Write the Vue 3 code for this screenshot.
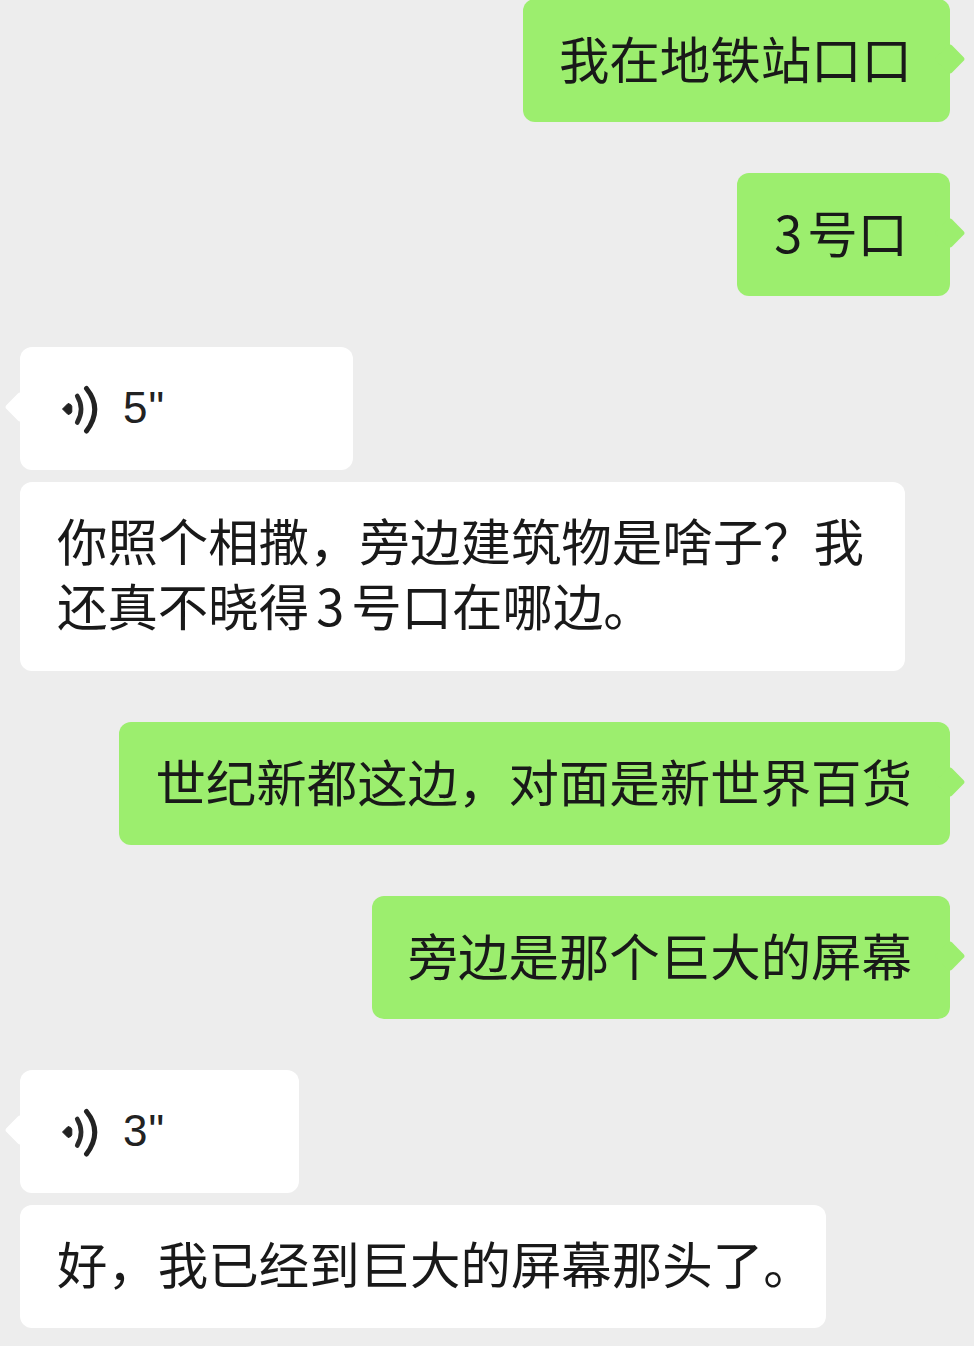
<script setup>
const rows = [
  { k: 'me', parts: [{ t: '我在地铁站口口' }], gap: 'g51' },
  { k: 'me', parts: [{ t: '3', c: 'num-r' }, { t: '号口', c: 'tr' }], gap: 'g51' },
  { k: 'voice', t: '5"', w: 333, gap: 'g12' },
  { k: 'them', two: true, parts: [{ t: '你照个相撒，旁边建筑物是啥子？我还真不晓得' }, { t: '3', c: 'num' }, { t: '号口在哪边。' }], gap: 'g51' },
  { k: 'me', parts: [{ t: '世纪新都这边，对面是新世界百货' }], gap: 'g51' },
  { k: 'me', parts: [{ t: '旁边是那个巨大的屏幕' }], gap: 'g51' },
  { k: 'voice', t: '3"', w: 279, gap: 'g12' },
  { k: 'them', parts: [{ t: '好，我已经到巨大的屏幕那头了' }, { t: '。', c: 'end' }], gap: 'g0' },
]
</script>

<template>
  <div class="chat">
    <div v-for="(r, i) in rows" :key="i" class="row" :class="[r.k === 'me' ? 'right' : 'left', r.gap]">
      <div v-if="r.k === 'voice'" class="bubble white tail-left voice" :style="{ width: r.w + 'px' }">
        <svg class="wave" width="40" height="50" viewBox="0 0 40 50">
          <path d="M2.5 25 L8 19.5 Q11.5 20 11.8 22.5 L11.8 27.5 Q11.5 30 8 30.5 Z" fill="#222" stroke="#222" stroke-width="1" stroke-linejoin="round" />
          <path d="M17.2 12 Q25 25 17.2 38.5" fill="none" stroke="#2a2a2a" stroke-width="4.6" stroke-linecap="round" />
          <path d="M26.5 4.5 Q43 25 26.5 47" fill="none" stroke="#222" stroke-width="5" stroke-linecap="round" />
        </svg>
        <span class="secs">{{ r.t }}</span>
      </div>
      <div v-else class="bubble" :class="r.k === 'me' ? 'green tail-right' : ['white', 'wide', r.two ? 'two' : 'one']">
        <span v-for="(p, j) in r.parts" :key="j" :class="p.c">{{ p.t }}</span>
      </div>
    </div>
  </div>
</template>

<style scoped>
.chat {
  width: 974px;
  height: 1346px;
  background: #ededed;
  overflow: hidden;
  box-sizing: border-box;
  padding: 0 24px 0 20px;
  font-family: "Noto Sans CJK SC", "Liberation Sans", sans-serif;
  color: #191919;
}
.row { display: flex; }
.row:first-child { margin-top: -1px; }
.right { justify-content: flex-end; }
.left { justify-content: flex-start; }
.g51 { margin-bottom: 51px; }
.g12 { margin-bottom: 12px; }
.g0 { margin-bottom: 0; }
.bubble {
  position: relative;
  box-sizing: border-box;
  border-radius: 12px;
  padding: 28px 38px 34px 36px;
  font-size: 50.45px;
  line-height: 61px;
}
.green { background: #9cee6e; }
.white { background: #fff; }
.wide { max-width: 885px; padding: 25px 37px 34px; line-height: 64px; }
.two { line-height: 65px; }
.one { white-space: nowrap; }
.num { margin: 0 7px; }
.num-r { margin: 0 5px 0 1px; }
.tr { margin-right: 4px; }
.end { margin-right: -25px; }
.voice { display: flex; align-items: center; height: 123px; padding: 0 0 0 40px; }
.wave { flex: none; }
.secs { font-family: "Liberation Sans", sans-serif; font-size: 44px; line-height: 46px; letter-spacing: 1px; margin-left: 23px; margin-bottom: 1px; color: #222; }
.tail-right::after, .tail-left::before {
  content: "";
  position: absolute;
  top: 50%;
  width: 22px;
  height: 22px;
  margin-top: -12.5px;
  border-radius: 3px;
  transform: rotate(45deg);
}
.tail-right::after { right: -11px; background: #9cee6e; }
.tail-left::before { left: -11px; background: #fff; }
</style>
